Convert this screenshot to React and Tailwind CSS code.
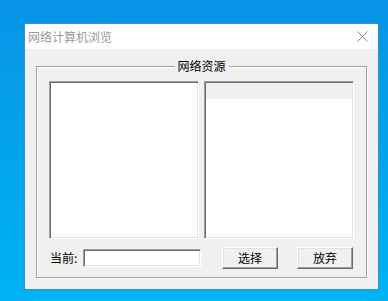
import React from 'react';

const font = "font-['Noto_Sans_CJK_SC','Noto_Sans',sans-serif]";

// sunken 3D edge used by list boxes and the text field
const sunken =
  'border border-t-[#a0a0a0] border-l-[#a0a0a0] border-r-white border-b-white shadow-[inset_1px_1px_0_#696969,inset_-1px_-1px_0_#e3e3e3]';

const Button = ({ label, className = '' }) => (
  <button
    className={`w-[56px] h-[22px] shrink-0 bg-[#f0f0f0] text-[12px] leading-none text-black flex items-center justify-center border border-t-white border-l-white border-r-[#696969] border-b-[#696969] shadow-[inset_-1px_-1px_0_#a0a0a0,inset_1px_1px_0_#e3e3e3] ${className}`}
  >
    {label}
  </button>
);

export default function App() {
  return (
    <div className={`w-[388px] h-[301px] overflow-hidden bg-gradient-to-b from-[#0894e6] to-[#00b3f5] pl-[24px] pt-[23px] ${font}`}>
      {/* dialog window */}
      <div className="w-[355px] h-[267px] border border-[#3d8ccb] bg-[#f0f0f0] flex flex-col">
        {/* title bar */}
        <div className="h-[25px] bg-white flex items-center justify-between pl-[3px] pr-[10px] shrink-0">
          <span className="text-[12px] leading-none text-[#9a9a9a]">网络计算机浏览</span>
          <svg width="11" height="11" viewBox="0 0 11 11">
            <path d="M0.5 0.5 L10.5 10.5 M10.5 0.5 L0.5 10.5" stroke="#8a8a8a" strokeWidth="1" fill="none" />
          </svg>
        </div>

        {/* group box */}
        <div className="relative ml-[11px] mt-[17px] w-[331px] h-[212px] border border-[#a0a0a0] shadow-[inset_1px_1px_0_#fff,1px_1px_0_#fff]">
          <span className="absolute left-1/2 -translate-x-1/2 -top-[8px] bg-[#f0f0f0] px-[3px] text-[12px] leading-[14px] text-black">
            网络资源
          </span>

          <div className="flex gap-[5px] pl-[12px] pt-[14px]">
            <div className={`w-[150px] h-[158px] bg-white ${sunken}`} />
            <div className={`w-[150px] h-[158px] bg-white p-[1px] ${sunken}`}>
              <div className="h-[16px] bg-[#f0f0f0]" />
            </div>
          </div>

          <div className="flex items-center pl-[13px] mt-[8px]">
            <span className="w-[33px] shrink-0 text-[12px] leading-none text-black">当前:</span>
            <div className={`w-[118px] h-[18px] bg-white shrink-0 ${sunken}`} />
            <Button label="选择" className="ml-[21px]" />
            <Button label="放弃" className="ml-[19px]" />
          </div>
        </div>
      </div>
    </div>
  );
}
